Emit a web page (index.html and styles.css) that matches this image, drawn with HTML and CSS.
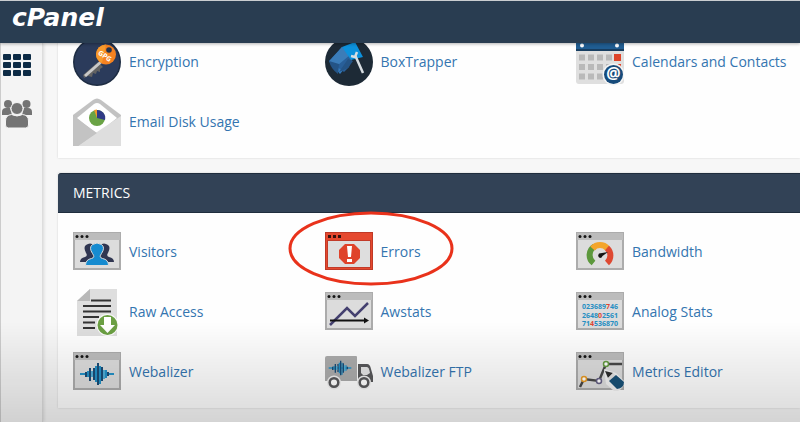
FILE: index.html
```html
<!DOCTYPE html>
<html lang="en">
<head>
<meta charset="utf-8">
<title>cPanel</title>
<link rel="stylesheet" href="styles.css">
</head>
<body>
<svg class="defs" aria-hidden="true">
  <symbol id="window" viewBox="0 0 48 48">
    <path fill="#acacac" d="M0 4h48v38H0z"/>
    <path fill="#bcbcbc" d="M1 5h46v7H1z"/>
    <path fill="#dcdcdc" d="M2 12h44v28H2z"/>
    <g fill="#151515"><circle cx="4" cy="8.500" r="1.500"/><circle cx="9" cy="8.500" r="1.500"/><circle cx="14" cy="8.500" r="1.500"/></g>
  </symbol>
  <symbol id="wave" viewBox="0 0 36 24">
    <g fill="none" stroke-width="2">
      <path stroke="#2491c6" d="M1 12h34M5 11v2M9 9v6M17 4v16M21 4v18M27 8v8M31 11v2"/>
      <path stroke="#1a4c75" d="M7 10v5M11 6v13M15 6v12M19 1v22M23 5v14M29 10v4"/>
      <path stroke="#52add4" d="M13 9v6M25 8v9"/>
    </g>
  </symbol>
</svg>

<header class="topbar"><a class="logo" href="#">cPanel</a></header>

<div class="page">
  <nav class="sidebar">
    <a href="#" aria-label="Home">
      <svg class="nav-icon" viewBox="0 0 30 30">
        <g fill="#0d2b45">
          <rect x="1" y="3" width="8" height="6" rx="1"/><rect x="11" y="3" width="8" height="6" rx="1"/><rect x="21" y="3" width="8" height="6" rx="1"/>
          <rect x="1" y="11" width="8" height="6" rx="1"/><rect x="11" y="11" width="8" height="6" rx="1"/><rect x="21" y="11" width="8" height="6" rx="1"/>
          <rect x="1" y="19" width="8" height="6" rx="1"/><rect x="11" y="19" width="8" height="6" rx="1"/><rect x="21" y="19" width="8" height="6" rx="1"/>
        </g>
      </svg>
    </a>
    <a href="#" aria-label="User Manager">
      <svg class="nav-icon" viewBox="0 0 30 30">
        <g fill="#747474">
          <circle cx="6" cy="5" r="4"/><circle cx="24.500" cy="5" r="4"/>
          <path d="M0 16v-3q0-4 4-4h4l2 7zM30 16v-3q0-4-4-4h-4l-2 7z"/>
          <g stroke="#f4f4f4"><circle cx="15" cy="9.500" r="6"/>
          <path d="M3.500 26v-4q0-6 6-6.500q5.500 3 11 0q6 .500 6 6.500v4q0 3-3 3h-17q-3 0-3-3z"/></g>
        </g>
      </svg>
    </a>
  </nav>

  <main class="content">
    <section class="card">
      <div class="grid">
        <a class="item" href="#">
          <svg class="icon" viewBox="0 0 48 48">
            <circle cx="24" cy="24" r="24" fill="#1d2c42"/><circle cx="24" cy="24" r="22.500" fill="#2b3b5b"/>
            <path fill="#626262" d="m25 24 5 5-3 2 0 3-3-1-1 3-3-1-1 4-4-1-4 2-1-3z"/>
            <path stroke="#c9c9c9" stroke-width="3" d="M29 23 12 38"/>
            <circle cx="33" cy="16.500" r="10" fill="#f58220"/>
            <path fill="#f99b2c" d="M23 16a10 10 0 0 1 10-9.500L29 25q-6-3-6-9"/>
            <circle cx="36" cy="12" r="2.800" fill="#26344d"/>
            <text class="gpg" x="24.500" y="16" transform="rotate(34 24.500 16)">GPG</text>
          </svg>
          <span>Encryption</span>
        </a>
        <a class="item" href="#">
          <svg class="icon" viewBox="0 0 48 48">
            <circle cx="24" cy="24" r="24" fill="#1d2a36"/>
            <path fill="#3379ba" d="M17 9 4 23l11 13 12-14z"/>
            <path fill="#285f99" d="m17 9 10 10-3 10-5 5-8-6z"/>
            <path fill="#3b7cb8" d="M17 9 4 24l9 3 12-10z"/>
            <path fill="#245486" d="m4 23 10 3-1 10q-7-5-9-13zM14 34l9-4 5-7-5-2z"/>
            <path fill="#0c91dc" d="M17 9 30 4l8 15-12 3z"/>
            <path fill="none" stroke="#d8dee2" stroke-width="2.500" d="m30 17 8 18M26 18l4 1 2-5"/>
          </svg>
          <span>BoxTrapper</span>
        </a>
        <a class="item" href="#">
          <svg class="icon" viewBox="0 0 48 48">
            <path fill="#dfdfdf" d="M0 1h48v42q0 3-3 3H3q-3 0-3-3z"/>
            <path fill="#205d92" d="M0 0h48v12H0z"/><path fill="#183e61" d="M0 11h48v2H0z"/>
            <circle cx="6" cy="7.500" r="2" fill="#fff"/><circle cx="41" cy="7.500" r="2" fill="#fff"/>
            <path stroke="#b9b9b9" stroke-width="6" stroke-dasharray="6 3" d="M3 19.500h33M3 29h42M3 38.500h33"/>
            <path fill="#de4429" d="M38 16h7v7h-7zM42 26h3v3h-3z"/>
            <circle cx="37.500" cy="36.500" r="11" fill="#f5f5f5"/><circle cx="37.500" cy="36.500" r="9.500" fill="#174b7b"/>
            <text class="at" x="37.500" y="41">@</text>
          </svg>
          <span>Calendars and Contacts</span>
        </a>
        <a class="item" href="#">
          <svg class="icon" viewBox="0 0 48 48">
            <path fill="#c2c2c2" d="M0 17 20 2q4-3 8 0l20 15v31H0z"/>
            <path fill="#fff" d="m4 20 17-14q3-2 6 0l17 14-20 16z"/>
            <path fill="#dedede" d="m24 34 24-16v30H5z"/><path fill="#c3c3c3" d="m0 18 24 17L5 48H0z"/>
            <circle cx="24" cy="20" r="8" fill="#6aa345"/>
            <path fill="#303b86" d="M24 20V12a8 8 0 0 1 8 10z"/><path fill="#f09a2b" d="m24 20-3-8 3-.500z"/>
          </svg>
          <span>Email Disk Usage</span>
        </a>
      </div>
    </section>

    <section class="card metrics">
      <h2>METRICS</h2>
      <div class="grid">
        <a class="item" href="#">
          <svg class="icon" viewBox="0 0 48 48">
            <use href="#window"/>
            <path fill="#303651" d="M7 34q0-4 5-5 3-1 1-4-3-6 0-8 4-3 8 0v17zM41 34q0-4-5-5-3-1-1-4 3-6 0-8-4-3-8 0v17z"/>
            <path fill="#168bd0" stroke="#dcdcdc" d="M12.500 37.500q0-6 6-7 4-1 1-5-4-6 0-9 4.500-3 9 0 4 3 0 9-3 4 1 5 6 1 6 7z"/>
          </svg>
          <span>Visitors</span>
        </a>
        <a class="item highlighted" href="#">
          <svg class="icon" viewBox="0 0 48 48">
            <path fill="#bf3927" d="M0 4h48v38H0z"/><path fill="#e5492f" d="M1 5h46v36H1z"/><path fill="#c23b29" d="M2 12h44v28H2z"/><path fill="#dedede" d="M3 13h42v26H3z"/>
            <path fill="#351410" d="M3 7h3v3H3zM8 7h3v3H8zM13 7h3v3h-3z"/>
            <path fill="#df432b" d="M20 16h9l6 6v8l-6 6h-9l-6-6v-8z"/>
            <path fill="#fff" d="M22 18h5l-1 11h-3zM22 31h5v3h-5z"/>
          </svg>
          <span>Errors</span>
          <svg class="ring" viewBox="0 0 166 75" aria-hidden="true"><ellipse cx="83" cy="37.500" rx="81" ry="35.500"/></svg>
        </a>
        <a class="item" href="#">
          <svg class="icon" viewBox="0 0 48 48">
            <use href="#window"/>
            <g fill="none" stroke-width="6">
              <path stroke="#5c983c" d="M17.500 35a10 10 0 0 1 1-16.500"/>
              <path stroke="#f4a52b" d="M16.500 20.500a10 10 0 0 1 15 0"/>
              <path stroke="#de4932" d="M31 20a10 10 0 0 1 0 15"/>
            </g>
            <path fill="#151515" d="m32 24-9 1.500q-2 3 1 4.500 2 0 2.500-2z"/>
          </svg>
          <span>Bandwidth</span>
        </a>
        <a class="item" href="#">
          <svg class="icon" viewBox="0 0 48 48">
            <path fill="#dedede" d="M17 1h27v47H4V13z"/><path fill="#b8b8b8" d="M17 1v12H4z"/>
            <path stroke="#333" stroke-width="2" d="M18 12.500h20M10 18h28M10 23.500h28M10 29h16M10 34.500h12M10 40h12"/>
            <circle cx="34.500" cy="37" r="11" fill="#fafafa"/><circle cx="34.500" cy="37" r="10" fill="#6b9f43"/>
            <path fill="#fff" d="M31 29h7v8h4l-7.500 8-7.500-8h4z"/>
          </svg>
          <span>Raw Access</span>
        </a>
        <a class="item" href="#">
          <svg class="icon" viewBox="0 0 48 48">
            <use href="#window"/>
            <path fill="none" stroke="#44406f" stroke-width="2.500" d="m5 37 17-17 8 8 13-13"/>
            <path stroke="#111" stroke-width="2" d="M5 32.500h36"/><path fill="#111" d="m39 29.500 5 3-5 3z"/>
          </svg>
          <span>Awstats</span>
        </a>
        <a class="item" href="#">
          <svg class="icon" viewBox="0 0 48 48">
            <use href="#window"/>
            <g class="digits">
              <text x="24" y="21">023689<tspan>7</tspan>46</text>
              <text x="24" y="29.500">2648<tspan>0</tspan>2561</text>
              <text x="24" y="38">71<tspan>4</tspan>536870</text>
            </g>
          </svg>
          <span>Analog Stats</span>
        </a>
        <a class="item" href="#">
          <svg class="icon" viewBox="0 0 48 48"><use href="#window"/><use href="#wave" x="6" y="14" width="36" height="24"/></svg>
          <span>Webalizer</span>
        </a>
        <a class="item" href="#">
          <svg class="icon" viewBox="0 0 48 48">
            <path fill="#acacac" d="M2 8h29q1 0 1 1v24H0V10q0-2 2-2z"/>
            <use href="#wave" x="3" y="11" width="24" height="18"/>
            <path fill="#59595b" d="M33 16h9q3 0 4 5l2 7v6H33z"/><path fill="#e5e5e5" d="M36 19h6q2 0 3 6l-3 2h-4l-2-2z"/>
            <circle cx="9" cy="34.500" r="7" fill="#f0f0f0"/><circle cx="39" cy="34.500" r="7" fill="#f0f0f0"/>
            <g fill="#fff" stroke="#59595b" stroke-width="2.500"><circle cx="9" cy="34.500" r="4.300"/><circle cx="39" cy="34.500" r="4.300"/></g>
          </svg>
          <span>Webalizer FTP</span>
        </a>
        <a class="item" href="#">
          <svg class="icon" viewBox="0 0 48 48">
            <use href="#window"/>
            <path fill="none" stroke="#484848" stroke-width="2.500" d="m4 39 4-8 15 2 7-17h16"/>
            <g fill="#fff" stroke-width="1.500"><circle cx="8" cy="31" r="2.500" stroke="#e79a25"/><circle cx="23" cy="33" r="2.500" stroke="#656084"/><circle cx="30" cy="16" r="2.500" stroke="#659b42"/></g>
            <path fill="#f1f1f1" d="m28 21 12 4 8 8q1 6-6 10h-4l-8-7z"/>
            <path fill="#2d2d2d" d="m29 23 8 2-5 5z"/><path fill="#dfdfdf" d="m32 30 5-5 3 3-6 6z"/>
            <path fill="#195177" d="m40 27 8 7q0 6-7 7l-8-8z"/>
          </svg>
          <span>Metrics Editor</span>
        </a>
      </div>
    </section>
  </main>
</div>
</body>
</html>
```
FILE: styles.css
```css
* { box-sizing: border-box; }

body {
  margin: 0;
  min-height: 100vh;
  display: flex;
  flex-direction: column;
  overflow: hidden;
  background: #f7f7f7;
  font-family: "Open Sans", "Noto Sans", sans-serif;
  font-size: 14px;
  line-height: 20px;
}

/* soft shade over the foot of the page */
body::after {
  content: "";
  position: fixed;
  inset: auto 0 0;
  height: 100px;
  background: linear-gradient(rgba(0, 0, 0, 0), rgba(0, 0, 0, 0.14));
  pointer-events: none;
}

a { color: #3475b0; text-decoration: none; }
svg { display: block; }
.defs { position: absolute; width: 0; height: 0; }

.topbar {
  position: relative;
  z-index: 1;
  height: 43px;
  padding: 0 12px;
  border-top: 1px solid #c9cdd0;
  background: #293d51;
  box-shadow: 0 1px 3px rgba(0, 0, 0, 0.3);
}

.logo {
  color: #fff;
  font: italic bold 25px/34px "DejaVu Sans", sans-serif;
}

.page { flex: 1; display: flex; }

.sidebar {
  flex: none;
  width: 43px;
  padding: 8px 1px;
  display: flex;
  flex-direction: column;
  gap: 18px;
  background: #f4f4f4;
  border-left: 1px solid #ccc;
  border-right: 1px solid #ddd;
  box-shadow: 1px 0 3px rgba(0, 0, 0, 0.12);
}

.nav-icon { width: 30px; height: 30px; }

.content {
  flex: 1;
  min-width: 0;
  padding-left: 15px;
  overflow: hidden;
}

.card {
  margin-top: -11px;
  padding-bottom: 6px;
  background: #fefefe;
  box-shadow: 0 0 2px rgba(0, 0, 0, 0.15);
}

.metrics { margin-top: 15px; }

h2 {
  margin: 0 0 9px;
  padding: 9px 15px;
  border: 1px solid #1f2d3d;
  border-width: 1px 0;
  border-top-left-radius: 3px;
  background: #324256;
  color: #fff;
  font-size: 14px;
  font-weight: 400;
  line-height: 20px;
}

.grid {
  display: grid;
  grid-template-columns: 17fr 17fr 15fr;
  grid-auto-rows: 60px;
  padding: 0 2px 0 15px;
}

.item {
  display: flex;
  align-items: center;
  gap: 8px;
  white-space: nowrap;
}

.icon { flex: none; width: 48px; height: 48px; }

.highlighted { position: relative; }

.ring {
  position: absolute;
  left: -37px;
  top: -11px;
  width: 166px;
  height: 75px;
}

.ring ellipse { fill: none; stroke: #e9321b; stroke-width: 3px; }

.gpg { fill: #fff; font-size: 7px; font-weight: 700; }
.at { fill: #fff; font-size: 16px; font-weight: 700; text-anchor: middle; }
.digits { fill: #268ec2; font-size: 7px; font-weight: 700; text-anchor: middle; }
.digits tspan { fill: #dc4633; }
```
